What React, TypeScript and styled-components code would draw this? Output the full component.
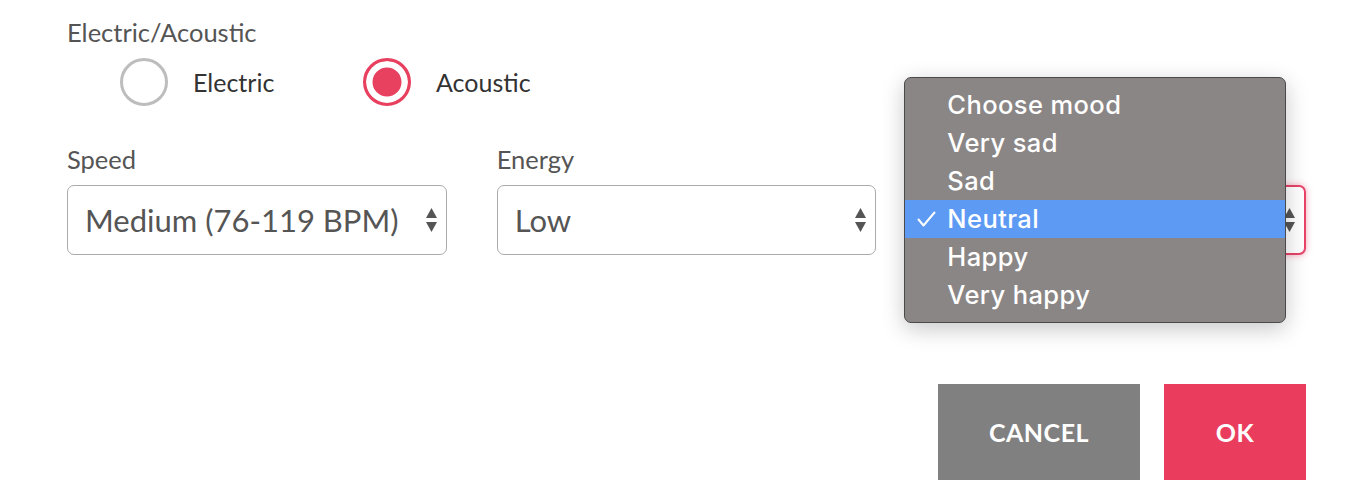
import styled, { createGlobalStyle } from 'styled-components'

const GlobalStyle = createGlobalStyle`
  body {
    margin: 0;
    background: #ffffff;
    font-family: 'Lato', 'Liberation Sans', sans-serif;
  }
`

const Page = styled.div`
  padding: 15px 58px 0 67px;
`

const Form = styled.form`
  display: flex;
  flex-direction: column;
`

const FieldLabel = styled.div<{ $covered?: boolean }>`
  font-size: 25.5px;
  line-height: 34px;
  color: #555555;
  visibility: ${(p) => (p.$covered ? 'hidden' : 'visible')};
`

const RadioRow = styled.div`
  display: flex;
  margin: 9px 0 0 53px;
  height: 48px;
`

const RadioOption = styled.label`
  display: flex;
  align-items: center;
  gap: 25px;
  width: 243px;
`

const RadioCircle = styled.span<{ $checked?: boolean }>`
  box-sizing: border-box;
  width: 48px;
  height: 48px;
  border-radius: 50%;
  border: 3px solid ${(p) => (p.$checked ? '#e8405f' : '#bdbdbd')};
  background: ${(p) => (p.$checked ? '#e8405f' : '#ffffff')};
  box-shadow: ${(p) => (p.$checked ? 'inset 0 0 0 6.5px #ffffff' : 'none')};
`

const RadioText = styled.span`
  font-size: 25px;
  color: #333333;
`

const SelectGrid = styled.div`
  display: grid;
  grid-template-columns: repeat(3, 1fr);
  column-gap: 50px;
  margin-top: 36px;
`

const Field = styled.div`
  position: relative;
  display: flex;
  flex-direction: column;
  gap: 9px;
`

const SelectBox = styled.div<{ $focused?: boolean }>`
  box-sizing: border-box;
  height: 70px;
  display: flex;
  align-items: center;
  justify-content: space-between;
  padding: 0 9px 0 17px;
  border-radius: 7px;
  border: ${(p) => (p.$focused ? '2px solid #e8446a' : '1.5px solid #ababab')};
  box-shadow: ${(p) =>
    p.$focused ? '0 0 7px rgba(232, 68, 106, 0.45)' : 'none'};
  background: #ffffff;
`

const SelectValue = styled.span`
  font-size: 31px;
  color: #555555;
`

const Arrows = () => (
  <svg width="11" height="25" viewBox="0 0 11 25">
    <path d="M5.5 0 L11 10 L0 10 Z" fill="#555" />
    <path d="M0 14 L11 14 L5.5 24 Z" fill="#555" />
  </svg>
)

const MoodMenu = styled.ul`
  position: absolute;
  left: -22px;
  top: -65px;
  width: 382px;
  box-sizing: border-box;
  margin: 0;
  padding: 8px 0;
  list-style: none;
  background: #8a8686;
  border: 1px solid #4a4a4a;
  border-radius: 7px;
  box-shadow: 0 6px 22px rgba(0, 0, 0, 0.22);
  font-family: 'Inter', 'Noto Sans', sans-serif;
`

const MoodItem = styled.li<{ $active?: boolean }>`
  position: relative;
  height: 38px;
  line-height: 38px;
  padding-left: 42px;
  font-size: 25.5px;
  font-weight: 500;
  letter-spacing: 0.4px;
  color: #ffffff;
  background: ${(p) => (p.$active ? '#5d9af4' : 'transparent')};
`

const CheckMark = styled.svg`
  position: absolute;
  left: 12px;
  top: 11px;
`

const Actions = styled.div`
  display: flex;
  justify-content: flex-end;
  gap: 24px;
  margin-top: 129px;
`

const Button = styled.button<{ $variant: 'cancel' | 'ok'; $w: number }>`
  width: ${(p) => p.$w}px;
  height: 96px;
  border: none;
  border-radius: 0;
  background: ${(p) => (p.$variant === 'ok' ? '#ea3d5e' : '#808080')};
  color: #ffffff;
  font-family: 'Lato', sans-serif;
  font-size: 25px;
  font-weight: 700;
  letter-spacing: 0.5px;
`

const moods = ['Choose mood', 'Very sad', 'Sad', 'Neutral', 'Happy', 'Very happy']

export default function App() {
  return (
    <Page>
      <GlobalStyle />
      <Form>
        <FieldLabel>Electric/Acoustic</FieldLabel>
        <RadioRow>
          <RadioOption>
            <RadioCircle />
            <RadioText>Electric</RadioText>
          </RadioOption>
          <RadioOption>
            <RadioCircle $checked />
            <RadioText>Acoustic</RadioText>
          </RadioOption>
        </RadioRow>

        <SelectGrid>
          <Field>
            <FieldLabel>Speed</FieldLabel>
            <SelectBox>
              <SelectValue>Medium (76-119 BPM)</SelectValue>
              <Arrows />
            </SelectBox>
          </Field>
          <Field>
            <FieldLabel>Energy</FieldLabel>
            <SelectBox>
              <SelectValue>Low</SelectValue>
              <Arrows />
            </SelectBox>
          </Field>
          <Field>
            {/* label and value sit under the open menu */}
            <FieldLabel $covered>Mood</FieldLabel>
            <SelectBox $focused>
              <span />
              <Arrows />
            </SelectBox>
            <MoodMenu>
              {moods.map((m) => (
                <MoodItem key={m} $active={m === 'Neutral'}>
                  {m === 'Neutral' && (
                    <CheckMark width="19" height="16" viewBox="0 0 19 16">
                      <path
                        d="M1.5 8.5 L6.5 14.5 L17.5 1.5"
                        fill="none"
                        stroke="#fff"
                        strokeWidth="2"
                        strokeLinecap="round"
                        strokeLinejoin="round"
                      />
                    </CheckMark>
                  )}
                  {m}
                </MoodItem>
              ))}
            </MoodMenu>
          </Field>
        </SelectGrid>

        <Actions>
          <Button type="button" $variant="cancel" $w={202}>
            CANCEL
          </Button>
          <Button type="button" $variant="ok" $w={142}>
            OK
          </Button>
        </Actions>
      </Form>
    </Page>
  )
}
